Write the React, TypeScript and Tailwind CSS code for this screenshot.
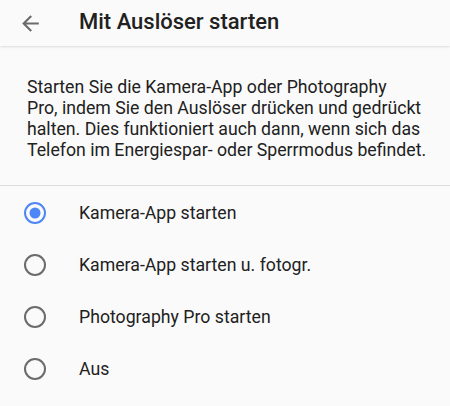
import React from "react";

function Radio({ checked }: { checked: boolean }) {
  return (
    <svg width="22" height="22" viewBox="0 0 22 22">
      {checked ? (
        <>
          <circle cx="11" cy="11" r="10" fill="none" stroke="#4f86f7" strokeWidth="2" />
          <circle cx="11" cy="11" r="5.5" fill="#4f86f7" />
        </>
      ) : (
        <circle cx="11" cy="11" r="10" fill="none" stroke="#6b6b6b" strokeWidth="2" />
      )}
    </svg>
  );
}

const options = [
  { label: "Kamera-App starten", checked: true },
  { label: "Kamera-App starten u. fotogr.", checked: false },
  { label: "Photography Pro starten", checked: false },
  { label: "Aus", checked: false },
];

const lines = [
  "Starten Sie die Kamera-App oder Photography",
  "Pro, indem Sie den Auslöser drücken und gedrückt",
  "halten. Dies funktioniert auch dann, wenn sich das",
  "Telefon im Energiespar- oder Sperrmodus befindet.",
];

export default function App() {
  return (
    <div
      className="w-[450px] h-[406px] bg-[#fafafa] overflow-hidden text-[#212121]"
      style={{ fontFamily: "Roboto, 'Liberation Sans', sans-serif" }}
    >
      <div className="h-[46px] flex items-center bg-[#fafafa] shadow-[0_1px_2px_rgba(0,0,0,0.12)] relative">
        <div className="w-[79px] flex items-center pl-[18px]">
          <svg width="25" height="25" viewBox="0 0 24 24" fill="#6b6b6b">
            <path d="M20 11H7.83l5.59-5.59L12 4l-8 8 8 8 1.41-1.41L7.83 13H20v-2z" />
          </svg>
        </div>
        <div className="text-[22px] font-medium text-[#212121] leading-none -mt-[2px]">Mit Auslöser starten</div>
      </div>
      <div className="pt-[31px] pb-[24px] pl-[27px] text-[17.7px] leading-[21px] text-[#212121]">
        {lines.map((l) => (
          <div key={l} className="whitespace-nowrap">{l}</div>
        ))}
      </div>
      <div className="h-px bg-[#dcdcdc]" />
      <div className="mt-px flex flex-col">
        {options.map((o) => (
          <div key={o.label} className="h-[52px] flex items-center">
            <div className="w-[79px] pl-[24px] flex items-center">
              <Radio checked={o.checked} />
            </div>
            <div className="text-[17.7px] text-[#212121]">{o.label}</div>
          </div>
        ))}
      </div>
    </div>
  );
}
